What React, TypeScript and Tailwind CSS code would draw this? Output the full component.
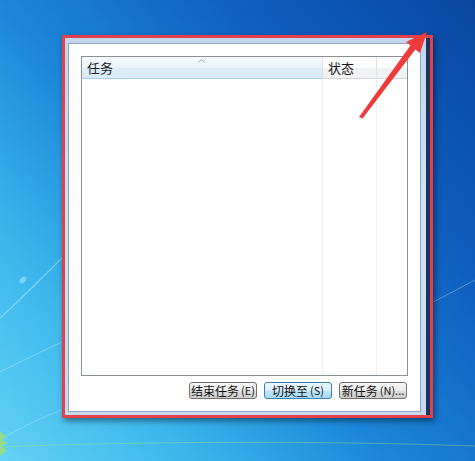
export default function App() {
  return (
    <div className="relative w-[475px] h-[461px] overflow-hidden bg-[linear-gradient(230deg,#0847a0_0%,#0f5fbf_28%,#1b86d8_55%,#3cb6ec_78%,#63d3f4_100%)] font-['Noto_Sans_CJK_SC',sans-serif]">
      <svg className="absolute inset-0" width="475" height="461" viewBox="0 0 475 461">
        <path d="M0 318 C20 300 40 280 62 258" stroke="rgba(255,255,255,0.35)" strokeWidth="1.2" fill="none" />
        <ellipse cx="23" cy="280" rx="4" ry="2.5" fill="rgba(255,255,255,0.35)" transform="rotate(-40 23 280)" />
        <path d="M0 372 C20 362 40 352 62 342" stroke="rgba(255,255,255,0.3)" strokeWidth="1" fill="none" />
        <path d="M0 440 C20 428 40 418 62 410" stroke="rgba(255,255,255,0.25)" strokeWidth="1" fill="none" />
        <path d="M433 302 C445 296 460 288 475 280" stroke="rgba(255,255,255,0.3)" strokeWidth="1" fill="none" />
        <path d="M0 447 C120 442 300 440 475 446" stroke="rgba(170,230,120,0.4)" strokeWidth="1" fill="none" />
        <path d="M0 432 L6 436 L2 440 L8 443 L1 446 L7 450 L0 456 Z" fill="#a8e060" opacity="0.75" />
      </svg>

      <div className="relative pt-[35px] pl-[62px]">
        <div className="w-[371px] h-[383px] border-[3px] border-[#e2404b] bg-[#1a3460] flex shadow-[2px_3px_6px_rgba(0,0,0,0.45)]">
          <div className="w-[361px] h-full bg-[linear-gradient(180deg,#c4d6ee_0%,#d4e2f3_50%,#c8d9ee_100%)] pl-[3px] pt-[5px] pr-[5px] pb-[3px]">
            <div className="w-full h-full bg-white border border-[#8fa5c0] flex flex-col pt-[12px] px-[12px] pb-[12px]">
              <div className="flex-1 border border-[#8a8f96] flex flex-col">
                <div className="relative h-[22px] flex text-[13px] text-[#1a1a1a] leading-none">
                  <div className="w-[240px] flex items-center pl-[5px] bg-[linear-gradient(180deg,#f7fbfe_0%,#e9f3fb_50%,#dcecf9_51%,#d9ebf9_100%)] border-b border-[#a8cde9]">任务</div>
                  <div className="w-[54px] flex items-center pl-[5px] border-l border-[#dfe3e8] bg-[linear-gradient(180deg,#ffffff_0%,#ffffff_50%,#f1f2f4_51%,#f1f2f4_100%)] border-b border-b-[#d5d5d5]">状态</div>
                  <div className="flex-1 border-l border-[#dfe3e8] bg-[linear-gradient(180deg,#ffffff_0%,#ffffff_50%,#f1f2f4_51%,#f1f2f4_100%)] border-b border-b-[#d5d5d5]"></div>
                  <svg className="absolute left-[116px] top-[2px]" width="7" height="4" viewBox="0 0 7 4">
                    <path d="M0.5 3.5 L3.5 0.5 L6.5 3.5" stroke="#9aa3ad" strokeWidth="1" fill="none" />
                  </svg>
                </div>
                <div className="flex-1 flex">
                  <div className="w-[240px]"></div>
                  <div className="w-[54px] border-l border-[#eef2f7]"></div>
                  <div className="flex-1 border-l border-[#eef2f7]"></div>
                </div>
              </div>
              <div className="flex justify-end gap-[7px] mt-[6px] pr-[1px] text-[12px] leading-none text-[#111] whitespace-nowrap">
                <div className="w-[68px] h-[17px] flex items-center justify-center gap-[2px] rounded-[3px] border border-[#707070] bg-[linear-gradient(180deg,#f6f6f6_0%,#ebebeb_50%,#dddddd_51%,#cfcfcf_100%)]"><span>结束任务</span><span className="text-[11px]">(E)</span></div>
                <div className="w-[68px] h-[17px] flex items-center justify-center gap-[2px] rounded-[3px] border border-[#3c7fb1] bg-[linear-gradient(180deg,#eaf6fd_0%,#d9f0fc_50%,#bee6fd_51%,#a7d9f5_100%)]"><span>切换至</span><span className="text-[11px]">(S)</span></div>
                <div className="w-[68px] h-[17px] flex items-center justify-center gap-[2px] rounded-[3px] border border-[#707070] bg-[linear-gradient(180deg,#f6f6f6_0%,#ebebeb_50%,#dddddd_51%,#cfcfcf_100%)]"><span>新任务</span><span className="text-[11px]">(N)...</span></div>
              </div>
            </div>
          </div>
        </div>
      </div>

      <svg className="absolute inset-0 pointer-events-none" width="475" height="461" viewBox="0 0 475 461">
        <polygon points="359,117 362.5,118.5 416.5,48 411.5,44" fill="#ee3a3a" />
        <polygon points="427,32 420,53 406,42" fill="#ee3a3a" />
      </svg>
    </div>
  );
}
